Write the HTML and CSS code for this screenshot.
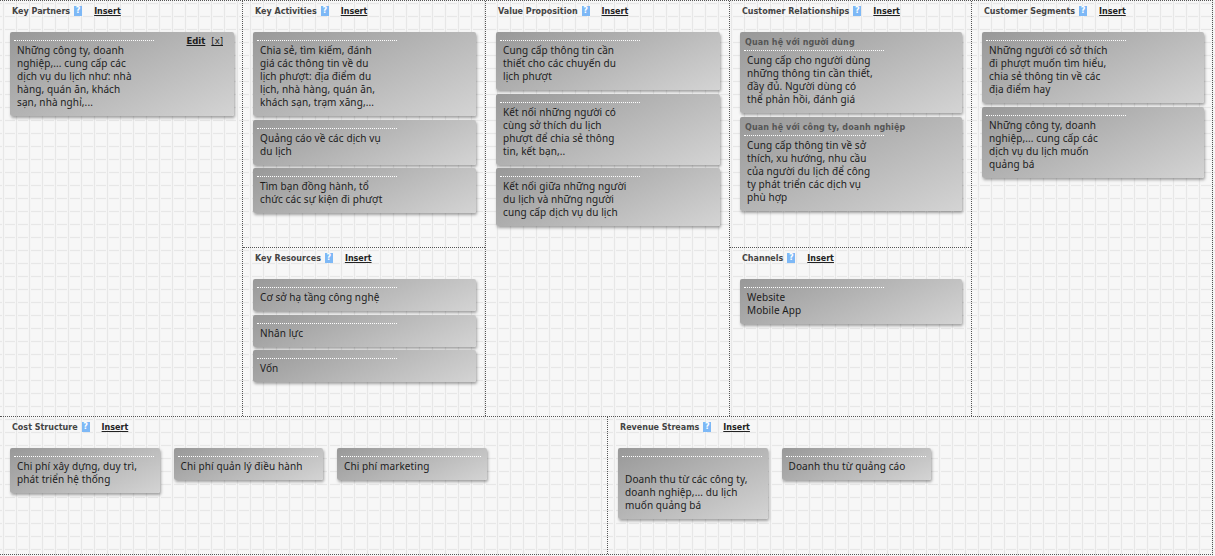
FILE: index.html
```html
<!DOCTYPE html>
<html lang="vi">
<head>
<meta charset="utf-8">
<title>Business Model Canvas</title>
<link rel="stylesheet" href="styles.css">
</head>
<body>
<main class="canvas">
  <div class="top">
    <section class="cell partners">
      <header class="head"><span class="label">Key Partners</span><span class="help">?</span><a class="ins">Insert</a></header>
      <div class="stack">
        <article class="card"><div class="actions"><a>Edit</a><a>[x]</a></div><p>Những công ty, doanh<br>nghiệp,... cung cấp các<br>dịch vụ du lịch như: nhà<br>hàng, quán ăn, khách<br>sạn, nhà nghỉ,...</p></article>
      </div>
    </section>
    <div class="col">
      <section class="cell upper">
        <header class="head"><span class="label">Key Activities</span><span class="help">?</span><a class="ins">Insert</a></header>
        <div class="stack">
          <article class="card"><p>Chia sẻ, tìm kiếm, đánh<br>giá các thông tin về du<br>lịch phượt: địa điểm du<br>lịch, nhà hàng, quán ăn,<br>khách sạn, trạm xăng,...</p></article>
          <article class="card"><p>Quảng cáo về các dịch vụ<br>du lịch</p></article>
          <article class="card"><p>Tìm bạn đồng hành, tổ<br>chức các sự kiện đi phượt</p></article>
        </div>
      </section>
      <section class="cell lower">
        <header class="head"><span class="label">Key Resources</span><span class="help">?</span><a class="ins">Insert</a></header>
        <div class="stack">
          <article class="card"><p>Cơ sở hạ tầng công nghệ</p></article>
          <article class="card"><p>Nhân lực</p></article>
          <article class="card"><p>Vốn</p></article>
        </div>
      </section>
    </div>
    <section class="cell value">
      <header class="head"><span class="label">Value Proposition</span><span class="help">?</span><a class="ins">Insert</a></header>
      <div class="stack">
        <article class="card"><p>Cung cấp thông tin cần<br>thiết cho các chuyến du<br>lịch phượt</p></article>
        <article class="card"><p>Kết nối những người có<br>cùng sở thích du lịch<br>phượt để chia sẻ thông<br>tin, kết bạn,..</p></article>
        <article class="card"><p>Kết nối giữa những người<br>du lịch và những người<br>cung cấp dịch vụ du lịch</p></article>
      </div>
    </section>
    <div class="col">
      <section class="cell upper">
        <header class="head"><span class="label">Customer Relationships</span><span class="help">?</span><a class="ins">Insert</a></header>
        <div class="stack">
          <article class="card titled"><h3>Quan hệ với người dùng</h3><p>Cung cấp cho người dùng<br>những thông tin cần thiết,<br>đầy đủ. Người dùng có<br>thể phản hồi, đánh giá</p></article>
          <article class="card titled"><h3>Quan hệ với công ty, doanh nghiệp</h3><p>Cung cấp thông tin về sở<br>thích, xu hướng, nhu cầu<br>của người du lịch để công<br>ty phát triển các dịch vụ<br>phù hợp</p></article>
        </div>
      </section>
      <section class="cell lower">
        <header class="head"><span class="label">Channels</span><span class="help">?</span><a class="ins">Insert</a></header>
        <div class="stack">
          <article class="card"><p>Website<br>Mobile App</p></article>
        </div>
      </section>
    </div>
    <section class="cell segments">
      <header class="head"><span class="label">Customer Segments</span><span class="help">?</span><a class="ins">Insert</a></header>
      <div class="stack">
        <article class="card"><p>Những người có sở thích<br>đi phượt muốn tìm hiểu,<br>chia sẻ thông tin về các<br>địa điểm hay</p></article>
        <article class="card"><p>Những công ty, doanh<br>nghiệp,... cung cấp các<br>dịch vụ du lịch muốn<br>quảng bá</p></article>
      </div>
    </section>
  </div>
  <div class="bottom">
    <section class="cell cost">
      <header class="head"><span class="label">Cost Structure</span><span class="help">?</span><a class="ins">Insert</a></header>
      <div class="row">
        <article class="card"><p>Chi phí xây dựng, duy trì,<br>phát triển hệ thống</p></article>
        <article class="card"><p>Chi phí quản lý điều hành</p></article>
        <article class="card"><p>Chi phí marketing</p></article>
      </div>
    </section>
    <section class="cell revenue">
      <header class="head"><span class="label">Revenue Streams</span><span class="help">?</span><a class="ins">Insert</a></header>
      <div class="row">
        <article class="card"><p><br>Doanh thu từ các công ty,<br>doanh nghiệp,... du lịch<br>muốn quảng bá</p></article>
        <article class="card"><p>Doanh thu từ quảng cáo</p></article>
      </div>
    </section>
  </div>
</main>
</body>
</html>
```
FILE: styles.css
```css
* { box-sizing: border-box; margin: 0; padding: 0; }
html, body { width: 1215px; height: 556px; overflow: hidden; }
body {
  font-family: "Noto Sans", sans-serif;
  font-size: 10px;
  letter-spacing: .1px;
  color: #1c1c1c;
  background-color: #f7f7f7;
  background-image:
    linear-gradient(90deg, transparent 2px, #f5f5f5 2px, #f5f5f5 3px, #e7e7e7 3px, #e7e7e7 4px, #f5f5f5 4px, #f5f5f5 5px, transparent 5px),
    linear-gradient(180deg, transparent 2px, #f5f5f5 2px, #f5f5f5 3px, #e7e7e7 3px, #e7e7e7 4px, #f5f5f5 4px, #f5f5f5 5px, transparent 5px);
  background-size: 13px 13px;
}
.canvas { width: 1213px; height: 555px; border-top: 1px dotted #555; border-right: 1px dotted #555; border-bottom: 1px dotted #555; display: flex; flex-direction: column; }
.top { display: flex; height: 416px; border-bottom: 1px dotted #555; }
.bottom { display: flex; flex: 1; }
.partners { width: 242px; }
.col { display: flex; flex-direction: column; border-left: 1px dotted #555; }
.col:nth-child(2) { width: 243px; }
.col:nth-child(4) { width: 242px; }
.value { width: 244px; border-left: 1px dotted #555; }
.segments { flex: 1; border-left: 1px dotted #555; }
.upper { height: 247px; border-bottom: 1px dotted #555; }
.lower { flex: 1; }
.col .stack, .value .stack { padding-left: 10px; padding-right: 9px; }
.segments .stack { padding-left: 10px; padding-right: 8px; }
.partners .stack { padding-left: 10px; padding-right: 8px; }
.cost { width: 607px; }
.revenue { flex: 1; border-left: 1px dotted #555; }
.head { display: flex; align-items: center; height: 20px; padding-left: 12px; font-family: "DejaVu Sans", sans-serif; font-size: 8px; font-weight: bold; color: #444; white-space: nowrap; letter-spacing: 0; }
.help { width: 8px; height: 10px; margin-left: 4px; background: #7db8f6; color: #fff; font-size: 8px; line-height: 10px; text-align: center; }
.ins { margin-left: 12px; color: #222; text-decoration: underline; }
.stack { display: flex; flex-direction: column; gap: 3.5px; padding-top: 11px; }
.row { display: flex; gap: 14px; align-items: flex-start; padding: 11px 0 0 10px; }
.row .card { width: 149.5px; }
.card { position: relative; padding: 8px 4px 7px 4px; border-radius: 2px; background: linear-gradient(155deg, #989898 0%, #d4d4d4 100%); box-shadow: 1px 2px 3px rgba(0,0,0,.35); }
.card::before { content: ""; display: block; width: 140px; border-top: 1px dotted #fff; margin-bottom: 3px; }
.titled { padding-top: 3px; }
.titled::before { display: none; }
.titled h3 { font-family: "DejaVu Sans", sans-serif; font-size: 8px; font-weight: bold; color: #555; line-height: 15px; padding: 0 0 0 1px; border-bottom: 1px dotted #fff; width: 140px; white-space: nowrap; margin-bottom: 3px; letter-spacing: .1px; }
.card p { padding-left: 3px; line-height: 13px; white-space: nowrap; }
.actions { position: absolute; top: 4px; right: 11px; display: flex; gap: 6px; font-family: "DejaVu Sans", sans-serif; font-size: 8.5px; font-weight: bold; line-height: 11px; letter-spacing: 0; }
.actions a { text-decoration: underline; }
.actions a:last-child { font-weight: normal; }
```
